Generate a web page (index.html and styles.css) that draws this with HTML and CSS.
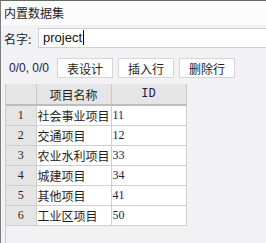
FILE: index.html
```html
<!DOCTYPE html>
<html lang="zh-CN">
<head>
  <meta charset="UTF-8">
  <title>内置数据集</title>
  <link rel="stylesheet" href="styles.css">
</head>
<body>

<div class="window">
  <div class="title">内置数据集</div>

  <div class="panel">
    <div class="name-row">
      <label class="name-label">名字:</label>
      <div class="name-input">project<span class="caret"></span></div>
    </div>

    <div class="toolbar">
      <span class="pos">0/0, 0/0</span>
      <button class="tool-btn">表设计</button>
      <button class="tool-btn">插入行</button>
      <button class="tool-btn">删除行</button>
    </div>

    <div class="grid-view">
      <table class="data-grid">
        <thead>
          <tr>
            <th class="row-num"></th>
            <th class="col-name">项目名称</th>
            <th class="col-id">ID</th>
          </tr>
        </thead>
        <tbody>
          <tr><td class="row-num">1</td><td>社会事业项目</td><td class="num">11</td></tr>
          <tr><td class="row-num">2</td><td>交通项目</td><td class="num">12</td></tr>
          <tr><td class="row-num">3</td><td>农业水利项目</td><td class="num">33</td></tr>
          <tr><td class="row-num">4</td><td>城建项目</td><td class="num">34</td></tr>
          <tr><td class="row-num">5</td><td>其他项目</td><td class="num">41</td></tr>
          <tr><td class="row-num">6</td><td>工业区项目</td><td class="num">50</td></tr>
        </tbody>
      </table>
    </div>
  </div>
</div>

</body>
</html>
```

FILE: styles.css
```css
/* Reset */
* {
  margin: 0;
  padding: 0;
  box-sizing: border-box;
}

body {
  width: 266px;
  height: 243px;
  overflow: hidden;
  font-family: "Noto Sans CJK SC", "Liberation Sans", sans-serif;
  font-size: 12px;
  color: #1e1e1e;
}

/* Dialog frame */
.window {
  display: flex;
  flex-direction: column;
  height: 243px;
  border-top: 1px solid #5d6d5e;
  border-left: 1px solid #7c7c7c;
  background: #f2f2f4;
}

.title {
  height: 24px;
  line-height: 24px;
  padding-left: 3px;
  background: #fcfcfc;
  font-size: 12px;
}

.panel {
  flex: 1;
  display: flex;
  flex-direction: column;
  min-height: 0;
}

/* Name field */
.name-row {
  display: flex;
  align-items: center;
  padding-top: 3px;
}

.name-label {
  width: 37px;
  padding-left: 3px;
  font-size: 12px;
}

.name-input {
  flex: 1;
  height: 20px;
  line-height: 18px;
  padding-left: 4px;
  background: #fff;
  border: 1px solid #cfcfcf;
  border-right: none;
  font-family: "Liberation Sans", sans-serif;
  font-size: 13px;
  color: #111;
}

.caret {
  display: inline-block;
  width: 1px;
  height: 15px;
  margin-left: 1px;
  vertical-align: -3px;
  background: #000;
}

/* Toolbar */
.toolbar {
  display: flex;
  align-items: center;
  margin-top: 10px;
}

.pos {
  width: 56px;
  padding-left: 8px;
  font-family: "Liberation Sans", sans-serif;
  font-size: 12px;
  white-space: nowrap;
  color: #1c1c4a;
}

.tool-btn {
  width: 56px;
  height: 20px;
  margin-right: 5px;
  background: #fff;
  border: 1px solid #d6d6d6;
  font-family: "Noto Sans CJK SC", sans-serif;
  font-size: 12px;
  color: #1e1e1e;
}

/* Grid */
.grid-view {
  flex: 1;
  margin-top: 6px;
  margin-left: 4px;
  border-left: 1px solid #cacaca;
}

.data-grid {
  border-collapse: collapse;
  table-layout: fixed;
  width: 180px;
}

.data-grid th {
  height: 21px;
  background: #e5e5e5;
  border-right: 1px solid #c9c9c9;
  border-bottom: 2px solid #bdbdbd;
  font-weight: normal;
  font-size: 12px;
}

.data-grid th.col-id {
  font-family: "Liberation Mono", monospace;
  font-size: 12px;
  color: #1c1c4a;
}

.data-grid td {
  height: 20px;
  padding-left: 1px;
  background: #fff;
  border-right: 1px solid #cfcfcf;
  border-bottom: 1px solid #cfcfcf;
  white-space: nowrap;
  overflow: hidden;
}

.data-grid .row-num {
  width: 30px;
}

.data-grid td.row-num {
  padding-left: 0;
  text-align: center;
  background: #e5e5e5;
  font-family: "Liberation Serif", serif;
  font-size: 12px;
}

.col-name,
.col-id {
  width: 75px;
}

.data-grid td.num {
  font-family: "Liberation Serif", serif;
  font-size: 12px;
  color: #1c1c4a;
}
```
